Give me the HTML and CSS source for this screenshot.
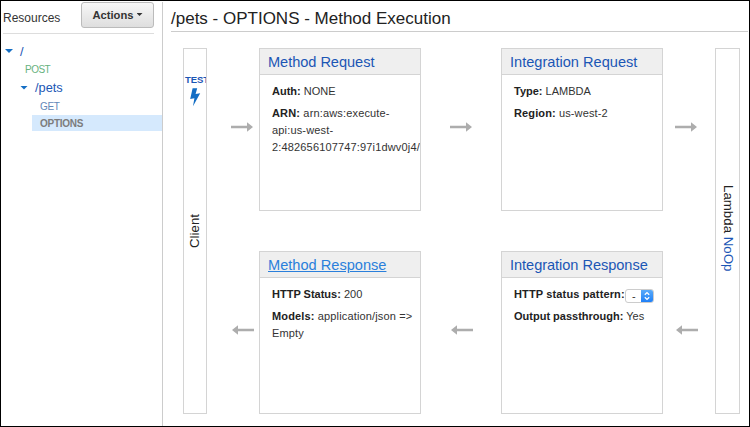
FILE: index.html
```
<!DOCTYPE html>
<html lang="en">
<head>
<meta charset="utf-8">
<title>Method Execution</title>
<link rel="stylesheet" href="styles.css">
</head>
<body>
<svg width="0" height="0" class="defs">
  <symbol id="arrow" viewBox="0 0 22 10"><path d="M0 3.7H16V0.3L22 5L16 9.7V6.3H0Z" fill="#adadad"/></symbol>
</svg>
<div class="app">
  <aside class="sidebar">
    <div class="toolbar">
      <span class="heading">Resources</span>
      <button class="actions">Actions<i class="caret"></i></button>
    </div>
    <ul class="tree">
      <li class="root"><i class="toggle"></i><a>/</a></li>
      <li class="verb post">POST</li>
      <li class="pets"><i class="toggle"></i><a>/pets</a></li>
      <li class="verb get">GET</li>
      <li class="verb selected"><span>OPTIONS</span></li>
    </ul>
  </aside>
  <main class="main">
    <h1 class="title">/pets - OPTIONS - Method Execution</h1>
    <div class="flow">
      <section class="lane client">
        <a class="test">TEST</a>
        <svg class="bolt" width="12" height="19" viewBox="0 0 12 19"><path d="M3.6 0.3L8.2 0.2L6.6 6L11.2 5.2L4 18.2L5.4 10.2L1.2 11Z" fill="#146ec4"/></svg>
        <span class="lane-name up">Client</span>
      </section>
      <svg class="arrow"><use href="#arrow"/></svg>
      <section class="card">
        <h2><a class="request">Method Request</a></h2>
        <div class="body">
          <p><b>Auth:</b> NONE</p>
          <p class="arn"><b>ARN:</b> arn:aws:execute-<br>api:us-west-<br>2:482656107747:97i1dwv0j4/</p>
        </div>
      </section>
      <svg class="arrow mid"><use href="#arrow"/></svg>
      <section class="card">
        <h2><a class="int-request">Integration Request</a></h2>
        <div class="body">
          <p><b>Type:</b> LAMBDA</p>
          <p class="region"><b>Region:</b> us-west-2</p>
        </div>
      </section>
      <svg class="arrow"><use href="#arrow"/></svg>
      <section class="lane backend">
        <span class="lane-name">Lambda <a>NoOp</a></span>
      </section>
      <svg class="arrow back"><use href="#arrow"/></svg>
      <section class="card">
        <h2><a class="hover">Method Response</a></h2>
        <div class="body">
          <p><b>HTTP Status:</b> 200</p>
          <p class="models"><b>Models:</b> application/json =&gt;<br>Empty</p>
        </div>
      </section>
      <svg class="arrow mid back"><use href="#arrow"/></svg>
      <section class="card">
        <h2><a class="int-response">Integration Response</a></h2>
        <div class="body">
          <p class="pattern"><b>HTTP status pattern:</b><span class="select"><span class="value">-</span><span class="stepper"><svg width="8" height="10" viewBox="0 0 8 10"><path d="M1.8 3.8L4 1.6L6.2 3.8M1.8 6.2L4 8.4L6.2 6.2" fill="none" stroke="#fff" stroke-width="1.3"/></svg></span></span></p>
          <p><b>Output passthrough:</b> Yes</p>
        </div>
      </section>
      <svg class="arrow back"><use href="#arrow"/></svg>
    </div>
  </main>
</div>
</body>
</html>
```

FILE: styles.css
```
* { box-sizing: border-box; }
body {
  margin: 0;
  font-family: "Liberation Sans", Arial, sans-serif;
  font-size: 11px;
  color: #333;
  background: #fff;
}
.defs { position: absolute; }
.app {
  display: flex;
  width: 750px;
  height: 427px;
  border: 1px solid #000;
  overflow: hidden;
}
a { color: #1b56b5; text-decoration: none; }

.sidebar {
  width: 162px;
  margin-top: 1px;
  border-right: 1px solid #ccc;
}
.toolbar {
  display: flex;
  justify-content: space-between;
  margin: 0 8px 0 2px;
  height: 32px;
  border-bottom: 1px solid #ddd;
}
.heading { font-size: 12px; line-height: 33px; }
.actions {
  display: flex;
  align-items: center;
  justify-content: center;
  gap: 3px;
  width: 73px;
  height: 26px;
  padding: 0 0 1px;
  font: bold 11.2px "Liberation Sans", Arial, sans-serif;
  color: #333;
  border: 1px solid #bbb;
  border-radius: 3px;
  background: linear-gradient(#f7f7f7, #dedede);
}
.caret {
  width: 6px;
  height: 3px;
  background: #333;
  clip-path: polygon(0 0, 100% 0, 50% 100%);
}
.tree { list-style: none; margin: 8px 0 0; padding: 0; }
.tree li { display: flex; align-items: center; height: 18px; }
.tree a { font-size: 12.8px; }
.toggle {
  width: 8px;
  height: 4px;
  background: #146ec4;
  clip-path: polygon(0 0, 100% 0, 50% 100%);
}
.root { padding-left: 4px; gap: 7px; }
.tree .pets { padding-left: 19px; gap: 7px; height: 19px; }
.tree .verb { font-size: 10px; letter-spacing: -0.4px; }
.tree .post { padding-left: 24px; color: #67b27e; letter-spacing: -0.5px; }
.get { padding-left: 39px; color: #6388b8; }
.tree .selected {
  margin-left: 31px;
  padding-left: 8px;
  height: 16px;
  background: #d5e9fd;
  color: #7c7c7c;
  font-weight: bold;
  letter-spacing: -0.25px;
}

.main { flex: 1; padding: 0 1px 0 8px; }
.title {
  margin: 0;
  height: 31px;
  border-bottom: 1px solid #ccc;
  font-size: 17px;
  font-weight: normal;
  line-height: 35px;
  color: #222;
  white-space: nowrap;
}
.flow {
  display: grid;
  grid-template-columns: 24px 52px 162px 80px 162px 52px 25px;
  grid-template-rows: 163px 163px;
  row-gap: 40px;
  margin: 16px 0 0 12px;
}
.lane {
  grid-row: 1 / 3;
  display: flex;
  flex-direction: column;
  align-items: center;
  border: 1px solid #d4d4d4;
  overflow: hidden;
}
.client { grid-column: 1; }
.backend { grid-column: 7; }
.test {
  align-self: flex-start;
  margin: 24px 0 0 1px;
  font-size: 9.5px;
  font-weight: bold;
  line-height: 13px;
  letter-spacing: -0.1px;
}
.bolt { margin-top: 2px; }
.lane-name {
  writing-mode: vertical-rl;
  font-size: 13.3px;
  line-height: 22px;
  color: #222;
  white-space: nowrap;
}
.up { transform: rotate(180deg); margin-top: 107px; }
.backend .lane-name { margin-top: 136px; }

.arrow { width: 22px; height: 10px; margin: 74px 0 0 24px; }
.client + .arrow { margin-left: 24px; }
.arrow.mid { margin-left: 29px; }
.card + .arrow:not(.mid) { margin-left: 12px; }
.back { transform: translateX(1px) scaleX(-1); }

.card { border: 1px solid #d4d4d4; overflow: hidden; }
.card h2 {
  margin: 0;
  padding-left: 8px;
  height: 26px;
  border-bottom: 1px solid #d4d4d4;
  background: #efefef;
  font-size: 14.6px;
  font-weight: normal;
  line-height: 26px;
  white-space: nowrap;
}
.card .request, .card .int-response { letter-spacing: -0.05px; }
.card .hover { color: #2a7fdb; text-decoration: underline; }
.body { padding: 8px 0 0 12px; }
.body p { margin: 0 0 5px; line-height: 17px; white-space: nowrap; }
.body b { color: #222; }
.body .arn { letter-spacing: 0.16px; }
.body .region { letter-spacing: 0.12px; }
.models { letter-spacing: 0.15px; }
.pattern { display: flex; align-items: center; height: 17px; letter-spacing: 0.14px; }
.select {
  display: flex;
  width: 29px;
  height: 14px;
  margin-top: 2px;
  border: 1px solid #ccc;
  border-radius: 3px;
  overflow: hidden;
}
.value { width: 16px; line-height: 12px; text-align: center; }
.stepper {
  display: flex;
  align-items: center;
  justify-content: center;
  width: 12px;
  margin: -1px;
  flex: 1;
  background: linear-gradient(#5eaefa, #1a7cf6);
}
```
